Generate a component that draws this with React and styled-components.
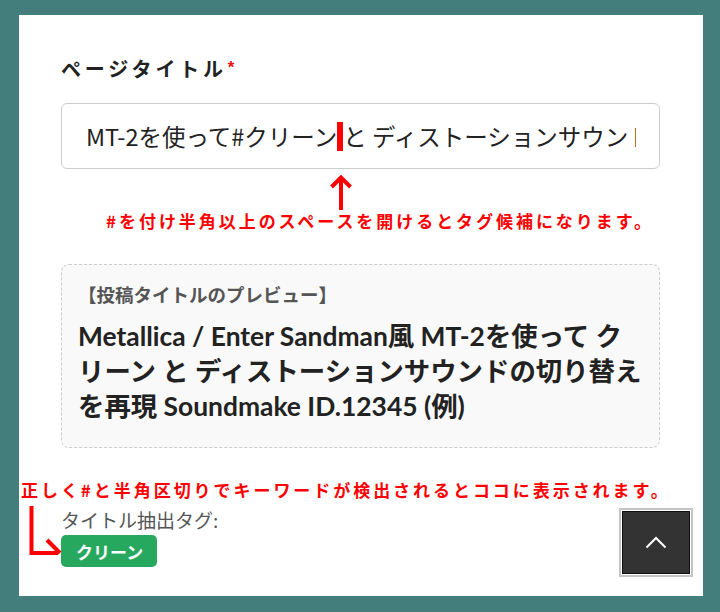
import React from "react";
import styled, { createGlobalStyle } from "styled-components";

const GlobalStyle = createGlobalStyle`
  html, body { margin: 0; padding: 0; }
  body {
    background: #437e7d;
    font-family: "Noto Sans CJK JP", "Noto Sans", sans-serif;
  }
  * { box-sizing: border-box; }
`;

const Page = styled.div`
  min-height: 612px;
  padding: 15px 17px 16px 19px;
  background: #437e7d;
`;

const Panel = styled.main`
  min-height: 581px;
  background: #ffffff;
  padding: 40px 43px 28px 42px;
  display: flex;
  flex-direction: column;
`;

const Heading = styled.label`
  display: flex;
  align-items: flex-start;
  font-family: "Noto Sans CJK JP", sans-serif;
  font-size: 20px;
  line-height: 28px;
  font-weight: 700;
  letter-spacing: 3.8px;
  color: #222;
`;

const Required = styled.span`
  font-family: "Liberation Sans", sans-serif;
  font-size: 17px;
  line-height: 17px;
  font-weight: 700;
  color: #ee1111;
  margin-left: 1px;
  margin-top: 4px;
  letter-spacing: 0;
`;

const TextField = styled.div`
  margin-top: 20px;
  height: 66px;
  border: 1px solid #cccccc;
  border-radius: 6px;
  background: #fff;
  padding: 0 23px 0 24px;
  display: flex;
  align-items: center;
`;

const FieldText = styled.div`
  flex: 1;
  overflow: hidden;
  white-space: nowrap;
  font-family: "Noto Sans CJK JP", sans-serif;
  font-size: 23.5px;
  line-height: 32px;
  color: #222;
  display: flex;
  align-items: center;
`;

const Caret = styled.span`
  display: inline-block;
  flex: none;
  width: 6px;
  height: 29px;
  background: #ff0000;
`;

const NoteArrow = styled.div`
  margin-top: 6px;
  padding-left: ${(p) => p.$offset}px;
  height: 36px;
  display: flex;
`;

const Note = styled.p`
  margin: ${(p) => p.$mt}px 0 0 ${(p) => p.$ml}px;
  font-family: "Noto Sans CJK JP", sans-serif;
  font-size: 17px;
  line-height: 20px;
  font-weight: 700;
  letter-spacing: 2.95px;
  color: #ff0000;
  white-space: nowrap;
`;

const Preview = styled.section`
  margin-top: 33px;
  border: 1px dashed #cccccc;
  border-radius: 8px;
  background: #f9f9f9;
  padding: 17px 14px 23px 16px;
`;

const PreviewLabel = styled.div`
  font-family: "Lato", "Noto Sans CJK JP", sans-serif;
  font-size: 18.5px;
  line-height: 26px;
  font-weight: 700;
  color: #555;
`;

const PreviewTitle = styled.h2`
  margin: 11px 0 0;
  font-family: "Lato", "Noto Sans CJK JP", sans-serif;
  font-size: 26.4px;
  line-height: 35px;
  font-weight: 700;
  color: #222;
  line-break: strict;
`;

const TagArea = styled.div`
  position: relative;
  margin-top: 8px;
`;

const TagLabel = styled.div`
  font-family: "Noto Sans CJK JP", sans-serif;
  font-size: 19px;
  line-height: 24px;
  color: #555;
`;

const TagList = styled.div`
  margin-top: 3px;
  display: flex;
  gap: 6px;
`;

const Tag = styled.span`
  display: inline-flex;
  align-items: center;
  height: 32px;
  padding: 0 14px 0 15px;
  border-radius: 5px;
  background: #27a85f;
  color: #fff;
  font-family: "Noto Sans CJK JP", sans-serif;
  font-size: 17px;
  font-weight: 600;
`;

const ElbowArrow = styled.svg`
  position: absolute;
  left: -33px;
  top: -3px;
`;

const ToTop = styled.button`
  position: fixed;
  right: 27px;
  bottom: 35px;
  width: 74px;
  height: 69px;
  padding: 0;
  background: #333333;
  border: 2px solid #c4c4c4;
  box-shadow: inset 0 0 0 1px #ffffff, inset 0 0 0 2px #111111;
  display: flex;
  align-items: center;
  justify-content: center;
  cursor: pointer;
`;

export default function App() {
  return (
    <>
      <GlobalStyle />
      <Page>
        <Panel>
          <Heading>
            ページタイトル<Required>*</Required>
          </Heading>
          <TextField>
            <FieldText>
              <span>MT-2を使って#クリーン</span>
              <Caret />
              <span>と ディストーションサウンドの切り替えを再現</span>
            </FieldText>
          </TextField>
          <NoteArrow $offset={269}>
            <svg width="22" height="36" viewBox="0 0 22 36">
              <line x1="11" y1="3" x2="11" y2="35" stroke="#ff0000" strokeWidth="4" />
              <polyline points="1.5,12 11,2.5 20.5,12" fill="none" stroke="#ff0000" strokeWidth="4" />
            </svg>
          </NoteArrow>
          <Note $mt={0} $ml={45}>#を付け半角以上のスペースを開けるとタグ候補になります。</Note>
          <Preview>
            <PreviewLabel>【投稿タイトルのプレビュー】</PreviewLabel>
            <PreviewTitle>
              Metallica / Enter Sandman風 MT-2を使って クリーン と ディストーションサウンドの切り替えを再現 Soundmake ID.12345 (例)
            </PreviewTitle>
          </Preview>
          <Note $mt={32} $ml={-40}>正しく#と半角区切りでキーワードが検出されるとココに表示されます。</Note>
          <TagArea>
            <ElbowArrow width="36" height="52" viewBox="0 0 36 52">
              <polyline points="3.5,1 3.5,48 30,48" fill="none" stroke="#ff0000" strokeWidth="4" />
              <line x1="19" y1="35" x2="32" y2="48" stroke="#ff0000" strokeWidth="4" />
            </ElbowArrow>
            <TagLabel>タイトル抽出タグ:</TagLabel>
            <TagList>
              <Tag>クリーン</Tag>
            </TagList>
          </TagArea>
        </Panel>
        <ToTop aria-label="ページトップへ">
          <svg width="22" height="13" viewBox="0 0 22 13">
            <polyline points="1.5,11.5 11,2 20.5,11.5" fill="none" stroke="#ffffff" strokeWidth="2" />
          </svg>
        </ToTop>
      </Page>
    </>
  );
}
